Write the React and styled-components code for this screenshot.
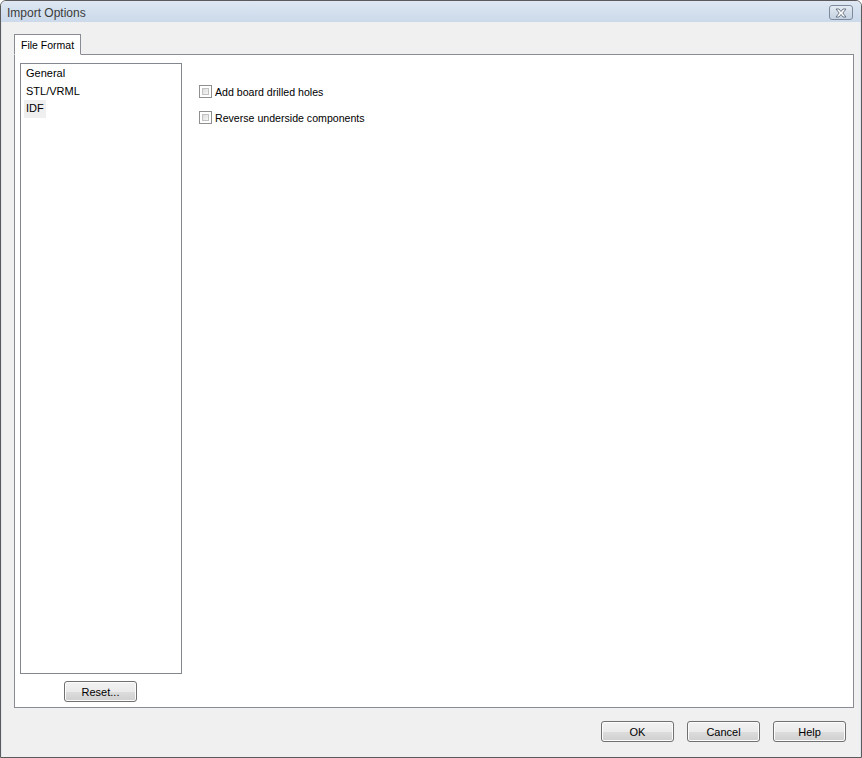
import React, { useState } from 'react';
import styled, { createGlobalStyle } from 'styled-components';

const GlobalStyle = createGlobalStyle`
  html, body {
    margin: 0;
    padding: 0;
    background: #ffffff;
  }
  body {
    font-family: 'Liberation Sans', Arial, sans-serif;
  }
`;

const Window = styled.div`
  width: 862px;
  height: 758px;
  box-sizing: border-box;
  border: 1px solid #5b5b5b;
  border-radius: 6px 6px 0 0;
  display: flex;
  flex-direction: column;
  overflow: hidden;
  background: #f0f0f0;
`;

const TitleBar = styled.div`
  height: 21px;
  flex: none;
  display: flex;
  align-items: flex-start;
  justify-content: space-between;
  padding: 0 8px 0 6px;
  background: linear-gradient(to bottom, #dfe8f3 0%, #d4e0ee 50%, #cbd9ea 100%);
`;

const Title = styled.span`
  font-family: 'Liberation Sans', Arial, sans-serif;
  font-size: 12px;
  color: #3b3b3b;
  padding-top: 5px;
`;

const CloseButton = styled.div`
  width: 24px;
  height: 15px;
  box-sizing: border-box;
  border: 1px solid #7c8a9c;
  border-radius: 3px;
  background: linear-gradient(to bottom, #e4ebf4 0%, #d3dde9 50%, #c6d3e3 100%);
  display: flex;
  align-items: center;
  justify-content: center;
  margin-top: 4px;
`;

const Body = styled.div`
  flex: 1;
  display: flex;
  flex-direction: column;
  padding: 12px 6px 0 12px;
  border-left: 1px solid #dfe6ef;
  border-right: 1px solid #dfe6ef;
`;

const TabStrip = styled.div`
  display: flex;
  height: 21px;
  margin-bottom: -1px;
  position: relative;
  z-index: 1;
`;

const Tab = styled.div`
  box-sizing: border-box;
  height: 21px;
  padding: 4px 6px 0 6px;
  border: 1px solid #898c95;
  border-bottom: 1px solid #ffffff;
  background: #ffffff;
  font-family: 'Liberation Sans', Arial, sans-serif;
  font-size: 10.5px;
  color: #000;
`;

const Panel = styled.div`
  height: 654px;
  box-sizing: border-box;
  border: 1px solid #898c95;
  background: #ffffff;
  display: flex;
  padding: 8px 0 0 5px;
`;

const LeftColumn = styled.div`
  display: flex;
  flex-direction: column;
  align-items: center;
  width: 162px;
`;

const ListBox = styled.div`
  width: 162px;
  height: 611px;
  box-sizing: border-box;
  border: 1px solid #828790;
  padding: 1px 0 0 3px;
  display: flex;
  flex-direction: column;
  align-items: flex-start;
`;

const ListItem = styled.div`
  font-family: 'Liberation Sans', Arial, sans-serif;
  font-size: 11px;
  color: #000;
  height: 17.5px;
  line-height: 17px;
  padding: 0 2px;
  background: ${p => (p.selected ? '#efefef' : 'transparent')};
`;

const OptionArea = styled.div`
  display: flex;
  flex-direction: column;
  gap: 13px;
  padding: 22px 0 0 17px;
`;

const CheckRow = styled.label`
  display: flex;
  align-items: center;
  gap: 3px;
  height: 13px;
  font-family: 'Liberation Sans', Arial, sans-serif;
  font-size: 10.6px;
  color: #000;
`;

const CheckBox = styled.span`
  width: 13px;
  height: 13px;
  box-sizing: border-box;
  border: 1px solid #8f8f8f;
  background: #ffffff;
  padding: 2px;
  display: block;

  &::after {
    content: '';
    display: block;
    width: 7px;
    height: 7px;
    border: 1px solid #c2c2c2;
    background: linear-gradient(135deg, #dcdcdc 0%, #ececec 60%, #f6f6f6 100%);
    box-sizing: border-box;
  }
`;

const Button = styled.button`
  width: 73px;
  height: 21px;
  box-sizing: border-box;
  border: 1px solid #707070;
  border-radius: 3px;
  background: linear-gradient(to bottom, #f2f2f2 0%, #ebebeb 50%, #dddddd 51%, #cfcfcf 100%);
  box-shadow: inset 0 0 0 1px #fcfcfc;
  font-family: 'Liberation Sans', Arial, sans-serif;
  font-size: 11px;
  color: #000;
  padding: 0;
  cursor: default;
`;

const ResetButton = styled(Button)`
  margin-top: 7px;
  margin-left: -1px;
`;

const Footer = styled.div`
  display: flex;
  justify-content: flex-end;
  gap: 13px;
  padding: 13px 8px 0 0;
`;

function CloseGlyph() {
  return (
    <svg width="14" height="10" viewBox="0 0 14 10">
      <path
        d="M2 1 L5 1 L7 3.5 L9 1 L12 1 L8.8 5 L12 9 L9 9 L7 6.5 L5 9 L2 9 L5.2 5 Z"
        fill="#ffffff"
        stroke="#5f6b7b"
        strokeWidth="0.9"
        strokeLinejoin="round"
      />
    </svg>
  );
}

export default function App() {
  const [items] = useState(['General', 'STL/VRML', 'IDF']);
  const options = ['Add board drilled holes', 'Reverse underside components'];

  return (
    <>
      <GlobalStyle />
      <Window>
        <TitleBar>
          <Title>Import Options</Title>
          <CloseButton>
            <CloseGlyph />
          </CloseButton>
        </TitleBar>
        <Body>
          <TabStrip>
            <Tab>File Format</Tab>
          </TabStrip>
          <Panel>
            <LeftColumn>
              <ListBox>
                {items.map(i => (
                  <ListItem key={i} selected={i === 'IDF'}>
                    {i}
                  </ListItem>
                ))}
              </ListBox>
              <ResetButton>Reset...</ResetButton>
            </LeftColumn>
            <OptionArea>
              {options.map(o => (
                <CheckRow key={o}>
                  <CheckBox />
                  {o}
                </CheckRow>
              ))}
            </OptionArea>
          </Panel>
          <Footer>
            <Button>OK</Button>
            <Button>Cancel</Button>
            <Button>Help</Button>
          </Footer>
        </Body>
      </Window>
    </>
  );
}
